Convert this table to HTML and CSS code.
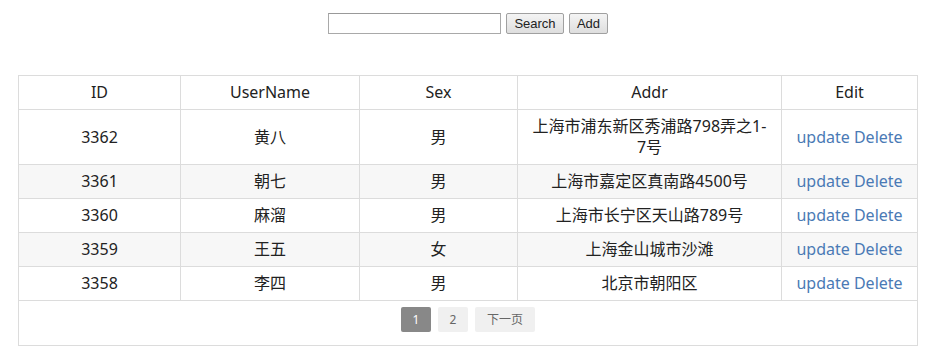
FILE: index.html
```html
<!DOCTYPE html>
<html>
<head>
<meta charset="utf-8">
<link rel="stylesheet" href="styles.css">
</head>
<body>
<div class="page">
  <div class="toolbar">
    <input class="search-input" type="text">
    <button class="btn btn-search">Search</button>
    <button class="btn btn-add">Add</button>
  </div>
  <table class="grid">
    <colgroup>
      <col class="c-id"><col class="c-name"><col class="c-sex"><col class="c-addr"><col class="c-edit">
    </colgroup>
    <thead>
      <tr><th>ID</th><th>UserName</th><th>Sex</th><th>Addr</th><th>Edit</th></tr>
    </thead>
    <tbody>
      <tr><td>3362</td><td>黄八</td><td>男</td><td>上海市浦东新区秀浦路798弄之1-7号</td><td><a href="#">update</a> <a href="#">Delete</a></td></tr>
      <tr><td>3361</td><td>朝七</td><td>男</td><td>上海市嘉定区真南路4500号</td><td><a href="#">update</a> <a href="#">Delete</a></td></tr>
      <tr><td>3360</td><td>麻溜</td><td>男</td><td>上海市长宁区天山路789号</td><td><a href="#">update</a> <a href="#">Delete</a></td></tr>
      <tr><td>3359</td><td>王五</td><td>女</td><td>上海金山城市沙滩</td><td><a href="#">update</a> <a href="#">Delete</a></td></tr>
      <tr><td>3358</td><td>李四</td><td>男</td><td>北京市朝阳区</td><td><a href="#">update</a> <a href="#">Delete</a></td></tr>
    </tbody>
    <tfoot>
      <tr><td colspan="5" class="pager-cell">
        <div class="pager">
          <span class="pg pg-active">1</span>
          <span class="pg">2</span>
          <span class="pg pg-next">下一页</span>
        </div>
      </td></tr>
    </tfoot>
  </table>
</div>
</body>
</html>
```
FILE: styles.css
```css
html, body {
  margin: 0;
  padding: 0;
  background: #fff;
}
.page {
  width: 936px;
  padding-top: 13px;
}
.toolbar {
  display: flex;
  justify-content: center;
  align-items: center;
  gap: 5px;
  height: 21px;
}
.search-input {
  box-sizing: border-box;
  width: 173px;
  height: 21px;
  margin: 0;
  border: 1px solid #a9a9a9;
  border-top-color: #999;
  padding: 1px 3px;
  background: #fff;
}
.btn {
  box-sizing: border-box;
  height: 21px;
  margin: 0;
  padding: 0;
  font-family: "Liberation Sans", Arial, sans-serif;
  font-size: 13px;
  color: #222;
  background: linear-gradient(#f4f4f4, #dedede);
  border: 1px solid #a0a0a0;
  border-radius: 2px;
}
.btn-search { width: 58px; }
.btn-add { width: 39px; }
.grid {
  margin: 41px auto 0;
  width: 899px;
  border-collapse: collapse;
  table-layout: fixed;
  font-family: "Noto Sans", "Noto Sans CJK SC", sans-serif;
  font-size: 16px;
  color: #222;
}
.c-id { width: 162px; }
.c-name { width: 179px; }
.c-sex { width: 158px; }
.c-addr { width: 264px; }
.c-edit { width: 136px; }
.grid th, .grid td {
  border: 1px solid #dcdcdc;
  text-align: center;
  padding: 6px 14px;
  line-height: 21px;
  font-weight: normal;
}
.grid tbody tr:nth-child(even) td {
  background: #f7f7f7;
}
.grid a {
  color: #4a7ab5;
  text-decoration: none;
}
.grid td.pager-cell {
  padding: 6px 0 13px;
  background: #fff;
}
.pager {
  display: flex;
  justify-content: center;
  gap: 7px;
}
.pg {
  display: inline-block;
  height: 25px;
  line-height: 25px;
  min-width: 30px;
  box-sizing: border-box;
  padding: 0 10px;
  font-family: "Noto Sans", "Noto Sans CJK SC", sans-serif;
  font-size: 12px;
  color: #666;
  background: #f0f0f0;
  border-radius: 2px;
}
.pg-next {
  padding: 0 12px;
}
.pg-active {
  background: #888;
  color: #fff;
}
```
